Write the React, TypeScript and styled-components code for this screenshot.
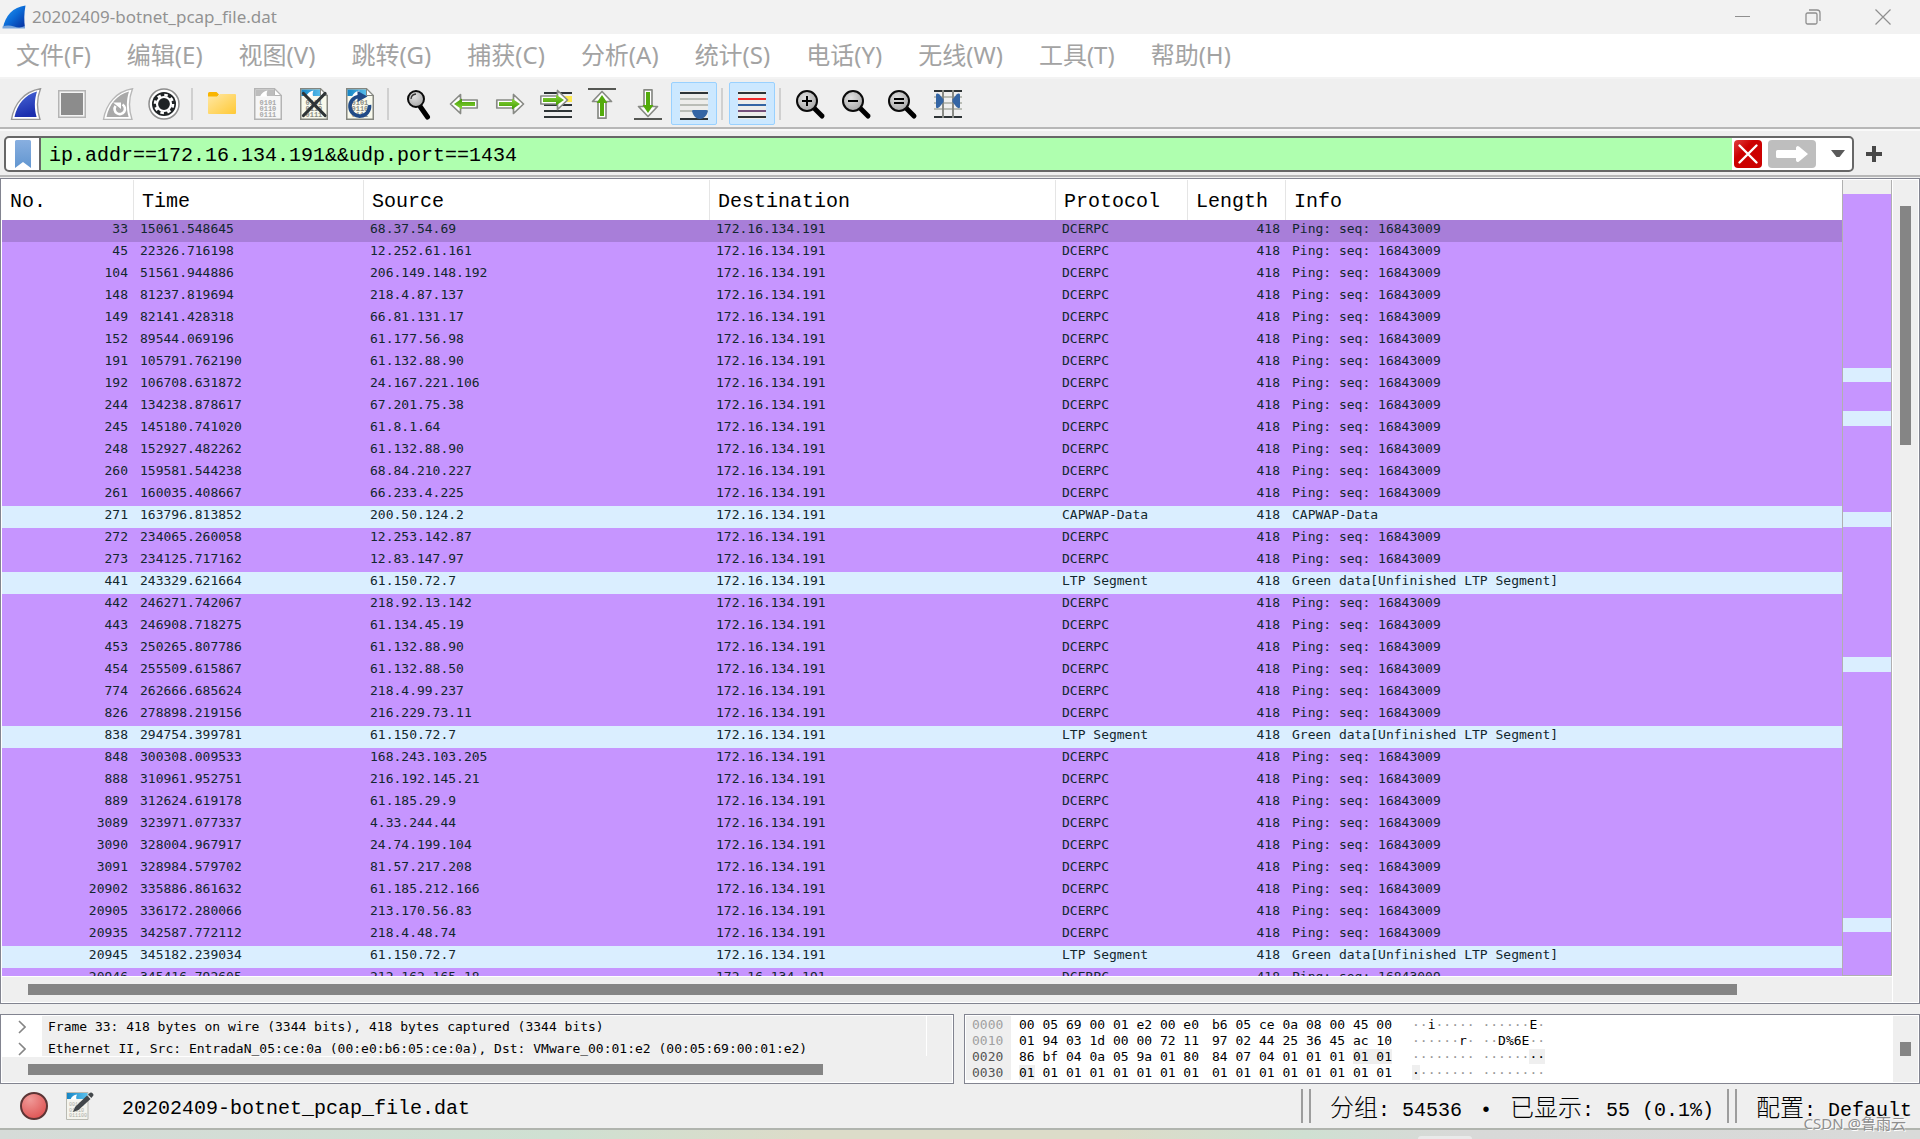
import React from "react";
import styled, { createGlobalStyle } from "styled-components";

const serifMono = `"Liberation Mono", "Noto Sans CJK SC", monospace`;
const dataMono = `"DejaVu Sans Mono", "Noto Sans CJK SC", monospace`;
const uiSans = `"Noto Sans", "Noto Sans CJK SC", sans-serif`;

const c = {
  chrome: "#efefef",
  frame: "#828490",
  line: "#b7b7b7",
  thumb: "#858585",
  purple: "#c695ff",
  selected: "#a87ed9",
  pale: "#daeeff",
};

const Global = createGlobalStyle`
  *, *::before, *::after { box-sizing: border-box; }
  body { margin: 0; background: ${c.chrome}; font-family: ${uiSans}; }
  button { border: 0; padding: 0; margin: 0; background: transparent; font: inherit; color: inherit; }
  svg { display: block; }
`;

/* ---------- window frame ---------- */

const Window = styled.div`
  display: flex;
  flex-direction: column;
  height: 100vh;
  overflow: hidden;
  background: ${c.chrome};
`;

const TitleBar = styled.header`
  display: flex;
  align-items: center;
  flex: none;
  height: 34px;
  padding: 0 2px;
  background: #f2f2f2;
`;

const Title = styled.h1`
  flex: 1;
  margin: 0 0 0 6px;
  font-size: 17px;
  font-weight: 400;
  line-height: 24px;
  color: #929292;
`;

const CaptionButton = styled.button`
  display: grid;
  place-items: center;
  width: 70px;
  height: 34px;
  color: #8f8f8f;
`;

const MenuBar = styled.nav`
  display: flex;
  flex: none;
  gap: 36px;
  height: 45px;
  padding: 0 16px 2px;
  align-items: center;
  background: #fff;
  border-bottom: 2px solid #f3f3f3;
`;

const MenuItem = styled.button`
  font-size: 24px;
  font-weight: 400;
  line-height: 32px;
  color: #a3a3a3;
  white-space: nowrap;
`;

const ToolBar = styled.div`
  display: flex;
  flex: none;
  align-items: center;
  height: 50px;
  padding: 1px 3px 0;
  border-bottom: 2px solid ${c.line};
`;

const ToolButton = styled.button<{ $on?: boolean }>`
  display: grid;
  place-items: center;
  width: 46px;
  height: 43px;
  border: 1px solid ${(p) => (p.$on ? "#99d1ff" : "transparent")};
  border-radius: 2px;
  background: ${(p) => (p.$on ? "#cce8ff" : "transparent")};
`;

const ToolGap = styled.span`
  width: 12px;
  height: 32px;
  padding-left: 4px;
  &::before {
    content: "";
    display: block;
    width: 2px;
    height: 100%;
    background: #d0d0d0;
  }
`;

/* ---------- filter bar ---------- */

const FilterBar = styled.form`
  display: flex;
  flex: none;
  align-items: center;
  gap: 12px;
  height: 48px;
  padding: 2px 38px 0 4px;
  border-top: 2px solid #f9f9f9;
  border-bottom: 2px solid ${c.line};
`;

const FilterField = styled.div`
  display: flex;
  flex: 1;
  align-items: center;
  height: 36px;
  border: 2px solid #676767;
  border-radius: 5px;
  background: #fff;
  overflow: hidden;
`;

const Bookmark = styled.button`
  display: grid;
  place-items: center;
  width: 35px;
  height: 32px;
  border-right: 2px solid #676767;
`;

const FilterInput = styled.input`
  flex: 1;
  min-width: 0;
  height: 32px;
  padding: 2px 8px 0;
  border: 0;
  outline: 0;
  background: #afffaf;
  color: #000;
  font-family: ${serifMono};
  font-size: 20px;
`;

const FilterActions = styled.div`
  display: flex;
  align-items: center;
  gap: 6px;
  padding: 0 1px 0 2px;
`;

const AddButton = styled.button`
  display: grid;
  place-items: center;
  width: 16px;
  height: 32px;
`;

/* ---------- panels ---------- */

const Main = styled.main`
  display: flex;
  flex: 1;
  flex-direction: column;
  gap: 10px;
  min-height: 0;
  padding-top: 1px;
`;

const Panel = styled.section`
  display: flex;
  min-width: 0;
  min-height: 0;
  padding: 1px;
  border: 1px solid ${c.frame};
  background: #fff;
`;

const ListPanel = styled(Panel)`
  flex: 1;
`;

const Column = styled.div`
  display: flex;
  flex: 1;
  flex-direction: column;
  gap: 1px;
  min-width: 0;
  min-height: 0;
`;

const ListBody = styled.div`
  display: flex;
  flex: 1;
  min-height: 0;
`;

const TableClip = styled.div`
  flex: 1;
  min-width: 0;
  overflow: hidden;
`;

const PacketTable = styled.table`
  width: 100%;
  table-layout: fixed;
  border-collapse: collapse;
  font-family: ${dataMono};
  font-size: 13px;
  color: #12272e;
`;

const Col = styled.col<{ $w?: number }>`
  ${(p) => (p.$w ? `width: ${p.$w}px;` : "")}
`;

const Th = styled.th`
  height: 40px;
  padding: 4px 8px 0;
  box-shadow: inset -1px 0 #e5e5e5;
  font-family: ${serifMono};
  font-size: 20px;
  font-weight: 400;
  line-height: 36px;
  text-align: left;
  color: #000;
  &:last-child { box-shadow: none; }
`;

const Row = styled.tr<{ $bg: string }>`
  height: 22px;
  background: ${(p) => p.$bg};
`;

const Td = styled.td<{ $right?: boolean }>`
  padding: 0 6px 4px;
  line-height: 18px;
  text-align: ${(p) => (p.$right ? "right" : "left")};
  white-space: nowrap;
`;

const MiniMap = styled.div`
  display: flex;
  flex-direction: column;
  width: 50px;
  padding-top: 14px;
  border: solid #b0b0b0;
  border-width: 0 1px 1px;
  background: ${c.chrome};
`;

const Stripe = styled.span<{ $grow: number; $pale: boolean }>`
  flex: ${(p) => p.$grow} 0 0;
  background: ${(p) => (p.$pale ? c.pale : c.purple)};
`;

const HTrack = styled.div<{ $left: number }>`
  flex: none;
  height: 25px;
  padding: 7px 0 0 ${(p) => p.$left}px;
  background: ${c.chrome};
`;

const HThumb = styled.div<{ $share: string }>`
  width: ${(p) => p.$share};
  height: 11px;
  background: ${c.thumb};
`;

const VTrack = styled.div<{ $top: string }>`
  display: flex;
  flex: none;
  flex-direction: column;
  width: 25px;
  margin-left: 1px;
  padding: ${(p) => p.$top} 7px 0;
  background: ${c.chrome};
`;

const VThumb = styled.div<{ $size: string }>`
  flex: none;
  height: ${(p) => p.$size};
  background: ${c.thumb};
`;

const Lower = styled.div`
  display: grid;
  flex: none;
  grid-template-columns: minmax(0, 954fr) minmax(0, 956fr);
  gap: 10px;
  height: 70px;
`;

const TreeList = styled.ul`
  flex: 1;
  min-height: 0;
  margin: 0;
  padding: 0;
  list-style: none;
  overflow: hidden;
  font-family: ${dataMono};
  font-size: 13px;
`;

const TreeItem = styled.li`
  display: flex;
  height: 22px;
  line-height: 22px;
  white-space: pre;
`;

const Twisty = styled.button`
  display: grid;
  place-items: center;
  flex: none;
  width: 40px;
  color: #858585;
`;

const TreeText = styled.span`
  flex: 1;
  margin-right: 26px;
  padding-left: 6px;
  background: ${c.chrome};
  box-shadow: 1px 0 #fff;
`;

const TreeShell = styled(Panel)`
  background: linear-gradient(90deg, #fff 50%, ${c.chrome} 50%);
  box-shadow: inset 0 0 0 1px #fff;
`;

const Hex = styled.div`
  display: grid;
  flex: 1;
  grid-template-columns: 46px 193px 193px 1fr;
  grid-auto-rows: 16px;
  overflow: hidden;
  font-family: ${dataMono};
  font-size: 13px;
  line-height: 17px;
  white-space: pre;
`;

const Offset = styled.span<{ $dim: boolean }>`
  padding-left: 6px;
  margin-right: 1px;
  background: ${c.chrome};
  color: ${(p) => (p.$dim ? "#a0a0a0" : "#555")};
`;

const Bytes = styled.span`
  padding-left: 7px;
`;

const Ascii = styled.span`
  padding-left: 14px;
  color: #000;
  i { font-style: normal; color: #999; }
`;

const Mark = styled.mark`
  background: ${c.chrome};
  color: #000;
`;

/* ---------- status bar ---------- */

const StatusBar = styled.footer`
  display: flex;
  flex: none;
  align-items: center;
  height: 46px;
  padding: 0 8px 0 11px;
  border-bottom: 2px solid #b0b4ae;
  font-family: ${serifMono};
  font-size: 20px;
  white-space: pre;
`;

const StatusButton = styled.button`
  display: grid;
  place-items: center;
  width: 46px;
  height: 40px;
`;

const FileName = styled.span`
  flex: 1;
  padding: 4px 0 0 19px;
`;

const Cjk = styled.span`
  font-family: "Noto Sans CJK SC", sans-serif;
  font-size: 24px;
  font-weight: 300;
  line-height: 32px;
`;

const Dot = styled.span`
  display: inline-block;
  width: 24px;
  text-align: center;
`;

const Grip = styled.span`
  width: 10px;
  height: 34px;
  margin: 0 19px 0 13px;
  border: solid #9d9d9d;
  border-width: 0 2px;
`;

const Desktop = styled.div`
  display: flex;
  justify-content: center;
  flex: none;
  height: 9px;
  padding: 6px 0 0 970px;
  background: linear-gradient(90deg, #d6dbd8 0%, #cfe0d2 29%, #dcdcc9 42%, #dcdcc9 58%, #cfe0d2 68%, #d8d9d8 76%, #d9dad9 100%);
`;

const TaskHint = styled.span`
  width: 54px;
  border-radius: 4px 4px 0 0;
  background: #e9eaea;
`;

const Credit = styled.span`
  position: absolute;
  right: 14px;
  bottom: 6px;
  font-size: 15px;
  line-height: 20px;
  color: #8e8e8e;
  text-shadow: 1px 1px #fff;
`;

/* ---------- icons ---------- */

const Svg = ({ w = 32, h = 32, children }: { w?: number; h?: number; children: React.ReactNode }) => (
  <svg width={w} height={h} viewBox={`0 0 ${w} ${h}`} fill="none" aria-hidden="true">
    {children}
  </svg>
);

const Defs = () => (
  <svg width="0" height="0" style={{ position: "absolute" }} aria-hidden="true">
    <defs>
      <linearGradient id="fin" x1="0" y1="0" x2="0.3" y2="1">
        <stop offset="0" stopColor="#4a6ad8" />
        <stop offset="1" stopColor="#1c2fae" />
      </linearGradient>
      <linearGradient id="app" x1="0" y1="0" x2="1" y2="1">
        <stop offset="0" stopColor="#2a9df4" />
        <stop offset="0.5" stopColor="#0b6ad6" />
        <stop offset="1" stopColor="#062c9b" />
      </linearGradient>
      <linearGradient id="folder" x1="0" y1="0" x2="1" y2="1">
        <stop offset="0" stopColor="#ffe8a6" />
        <stop offset="1" stopColor="#ffc935" />
      </linearGradient>
      <linearGradient id="green" x1="0" y1="0" x2="0" y2="1">
        <stop offset="0" stopColor="#8cd63c" />
        <stop offset="1" stopColor="#3f9a00" />
      </linearGradient>
      <linearGradient id="sky" x1="0" y1="0" x2="1" y2="0">
        <stop offset="0" stopColor="#1584c4" />
        <stop offset="1" stopColor="#5ec3ee" />
      </linearGradient>
      <radialGradient id="lens" cx="0.4" cy="0.35" r="0.7">
        <stop offset="0" stopColor="#e0e0e0" />
        <stop offset="1" stopColor="#a6a6a6" />
      </radialGradient>
      <radialGradient id="rec" cx="0.35" cy="0.25" r="0.9">
        <stop offset="0" stopColor="#f09a98" />
        <stop offset="1" stopColor="#dc4a4a" />
      </radialGradient>
      <linearGradient id="mark" x1="0" y1="0" x2="0" y2="1">
        <stop offset="0" stopColor="#88afe0" />
        <stop offset="1" stopColor="#6296d0" />
      </linearGradient>
      <linearGradient id="red" x1="0" y1="0" x2="0.6" y2="0.6">
        <stop offset="0" stopColor="#e04040" />
        <stop offset="0.6" stopColor="#cc0000" />
      </linearGradient>
    </defs>
  </svg>
);

const finPath = "M1.5 31.5C4 16 14 3.500 30.500 .8C26.500 11 26.500 21 30 31.500Z";

const FinIcon = () => (
  <Svg>
    <path d={finPath} fill="#fff" stroke="#9a9a9a" strokeWidth="1.4" />
    <path d="M4.500 29C7 17 15 6.500 27 3.600C24.200 12 24.300 21 26.600 29Z" fill="url(#fin)" />
  </Svg>
);

const StopIcon = () => (
  <Svg>
    <rect x="2.750" y="2.750" width="26.500" height="26.500" fill="#f4f4f4" stroke="#b4b4b4" strokeWidth="1.500" />
    <rect x="5" y="5" width="22" height="22" fill="#8c8c8c" />
  </Svg>
);

const RestartIcon = () => (
  <Svg>
    <path d={finPath} fill="#fff" stroke="#b8b8b8" strokeWidth="1.400" />
    <path d="M4.500 29C7 17 15 6.500 27 3.600C24.200 12 24.300 21 26.600 29Z" fill="#a9a9a9" />
    <path d="M20.500 16.500a5.200 5.200 0 1 1-7 1.500" stroke="#fff" strokeWidth="2.600" />
    <path d="M11 14.500h8v6.500z" fill="#fff" />
  </Svg>
);

const OptionsIcon = () => (
  <Svg>
    <circle cx="16" cy="16" r="15" fill="#fff" stroke="#8d8d8d" strokeWidth="1.500" />
    <circle cx="16" cy="16" r="12" fill="#1f2325" />
    <circle cx="16" cy="16" r="7" stroke="#fff" strokeWidth="2.200" />
    <circle cx="16" cy="16" r="9" stroke="#fff" strokeWidth="2.600" strokeDasharray="3.500 3.570" />
  </Svg>
);

const FolderIcon = () => (
  <Svg>
    <path d="M2 5.500A1.500 1.500 0 0 1 3.500 4h7l2.500 2.500L11 9H2z" fill="#f9b500" />
    <path d="M2 8.500h9.500L14 6h15a1 1 0 0 1 1 1v18a1 1 0 0 1-1 1H3a1 1 0 0 1-1-1z" fill="url(#folder)" />
  </Svg>
);

const Digits = ({ fill }: { fill: string }) => (
  <g fill={fill} fontFamily="Liberation Mono, monospace" fontWeight="700" fontSize="7">
    <text x="7.500" y="16.500">0101</text>
    <text x="7.500" y="22.500">0110</text>
    <text x="7.500" y="28.500">0111</text>
  </g>
);

const Sheet = ({ edge, top, paper, digits }: { edge: string; top: string; paper: string; digits: string }) => (
  <>
    <path d="M2.750 .75H22.500L29.250 7.500V31.250H2.750Z" fill={paper} stroke={edge} strokeWidth="1.500" />
    <path d="M3.500 1.500H22L24 3.500V8H3.500Z" fill={top} />
    <path d="M8 8.500C9.500 5 12 3.200 15.500 2.500C14.500 4.500 14.500 6.500 15.200 8.500Z" fill="#fff" />
    <path d="M22.500 1V7.500H29Z" fill="#fff" stroke={edge} strokeWidth="1" />
    <Digits fill={digits} />
  </>
);

const SaveIcon = () => (
  <Svg>
    <Sheet edge="#b4b4b4" top="#bdbdbd" paper="#f6f6f6" digits="#a9a9a9" />
  </Svg>
);

const CloseFileIcon = () => (
  <Svg>
    <Sheet edge="#84867f" top="url(#sky)" paper="#f8f9ec" digits="#8a8c84" />
    <path d="M5.500 5.500L27 27.500M27 5.500L5.500 27.500" stroke="#2e3436" strokeWidth="3.200" strokeLinecap="round" />
  </Svg>
);

const ReloadIcon = () => (
  <Svg>
    <Sheet edge="#84867f" top="url(#sky)" paper="#f8f9ec" digits="#8a8c84" />
    <path d="M25.500 17A9.800 9.800 0 1 1 15 8.500" stroke="#204a87" strokeWidth="3.600" />
    <path d="M13.500 3L23.500 8.500L13.500 14Z" fill="#204a87" />
  </Svg>
);

const FindIcon = () => (
  <Svg>
    <path d="M18.500 19L25.500 29" stroke="#000" strokeWidth="5" strokeLinecap="round" />
    <circle cx="14" cy="11" r="8" fill="url(#lens)" stroke="#0b0b0b" strokeWidth="2" />
    <path d="M9 11a5.500 5.500 0 0 1 5-5" stroke="#333" strokeWidth="1.300" />
  </Svg>
);

const arrowOuter = "M29.500 16L19.500 6.500V12H2.800V20H19.500V25.500Z";
const arrowInner = "M26 16L18 10.500V14H5V18H18V21.500Z";

const Arrow = ({ turn = 0, shift = "" }: { turn?: number; shift?: string }) => (
  <g transform={`${shift} rotate(${turn} 16 16)`}>
    <path d={arrowOuter} fill="#fff" stroke="#888a85" strokeWidth="1.700" strokeLinejoin="round" />
    <path d={arrowInner} fill={turn % 180 ? "#53ab0c" : "url(#green)"} />
  </g>
);

const Bars = ({ list, x = 2, w = 28 }: { list: [number, string][]; x?: number; w?: number }) => (
  <>
    {list.map(([y, f]) => (
      <rect key={y} x={x} y={y} width={w} height="2" fill={f} />
    ))}
  </>
);

const GotoIcon = () => (
  <Svg>
    <rect x="20" y="8" width="12" height="6" fill="#fce94f" />
    <Bars x={4} list={[[4, "#2e3436"], [16, "#2e3436"], [22, "#2e3436"], [28, "#2e3436"]]} />
    <Arrow shift="translate(-2 -4)" />
  </Svg>
);

const FirstIcon = () => (
  <Svg>
    <Bars list={[[0, "#555753"]]} />
    <Arrow turn={-90} shift="translate(0 1)" />
  </Svg>
);

const LastIcon = () => (
  <Svg>
    <Arrow turn={90} shift="translate(0 -1)" />
    <Bars list={[[30, "#555753"]]} />
  </Svg>
);

const AutoScrollIcon = () => (
  <Svg>
    <rect x="2" y="3" width="28" height="28" fill="#ededea" />
    <Bars list={[[4, "#2e3436"], [10, "#babdb6"], [16, "#babdb6"], [22, "#babdb6"], [30, "#2e3436"]]} />
    <path d="M14 23C14 22 15 22 16 22H28C30 22 30 23 29.500 24.500C28.500 28 25.500 31 22 31S15 28 14 23Z" fill="#3465a4" />
  </Svg>
);

const ColorizeIcon = () => (
  <Svg>
    <rect x="2" y="3" width="28" height="28" fill="#ededea" />
    <Bars list={[[4, "#2e3436"], [10, "#ef2929"], [16, "#3465a4"], [22, "#75507b"], [28, "#2e3436"]]} />
  </Svg>
);

const ZoomIcon = ({ sign }: { sign: string }) => (
  <Svg>
    <path d="M20 20L28 28" stroke="#000" strokeWidth="5" strokeLinecap="round" />
    <circle cx="13" cy="13" r="10" fill="url(#lens)" stroke="#0b0b0b" strokeWidth="2" />
    <path d={sign} stroke="#000" strokeWidth="2" />
  </Svg>
);

const ResizeIcon = () => (
  <Svg>
    <Bars list={[[2, "#2e3436"], [8, "#babdb6"], [14, "#babdb6"], [20, "#babdb6"], [28, "#2e3436"]]} />
    <rect x="10" y="2" width="2" height="28" fill="#888a85" />
    <rect x="20" y="2" width="2" height="28" fill="#888a85" />
    <path d="M4 7C4 5 6 5 7.500 6.500L11.500 11.500V14L7.500 19C6 20.500 4 20.500 4 19Z" fill="#3465a4" />
    <path d="M28 7C28 5 26 5 24.500 6.500L20.500 11.500V14L24.500 19C26 20.500 28 20.500 28 19Z" fill="#3465a4" />
  </Svg>
);

/* ---------- data ---------- */

const menus = ["文件(F)", "编辑(E)", "视图(V)", "跳转(G)", "捕获(C)", "分析(A)", "统计(S)", "电话(Y)", "无线(W)", "工具(T)", "帮助(H)"];

const packets: [number, string, string, string?][] = [
  [33, "15061.548645", "68.37.54.69"],
  [45, "22326.716198", "12.252.61.161"],
  [104, "51561.944886", "206.149.148.192"],
  [148, "81237.819694", "218.4.87.137"],
  [149, "82141.428318", "66.81.131.17"],
  [152, "89544.069196", "61.177.56.98"],
  [191, "105791.762190", "61.132.88.90"],
  [192, "106708.631872", "24.167.221.106"],
  [244, "134238.878617", "67.201.75.38"],
  [245, "145180.741020", "61.8.1.64"],
  [248, "152927.482262", "61.132.88.90"],
  [260, "159581.544238", "68.84.210.227"],
  [261, "160035.408667", "66.233.4.225"],
  [271, "163796.813852", "200.50.124.2", "CAPWAP-Data"],
  [272, "234065.260058", "12.253.142.87"],
  [273, "234125.717162", "12.83.147.97"],
  [441, "243329.621664", "61.150.72.7", "LTP Segment"],
  [442, "246271.742067", "218.92.13.142"],
  [443, "246908.718275", "61.134.45.19"],
  [453, "250265.807786", "61.132.88.90"],
  [454, "255509.615867", "61.132.88.50"],
  [774, "262666.685624", "218.4.99.237"],
  [826, "278898.219156", "216.229.73.11"],
  [838, "294754.399781", "61.150.72.7", "LTP Segment"],
  [848, "300308.009533", "168.243.103.205"],
  [888, "310961.952751", "216.192.145.21"],
  [889, "312624.619178", "61.185.29.9"],
  [3089, "323971.077337", "4.33.244.44"],
  [3090, "328004.967917", "24.74.199.104"],
  [3091, "328984.579702", "81.57.217.208"],
  [20902, "335886.861632", "61.185.212.166"],
  [20905, "336172.280066", "213.170.56.83"],
  [20935, "342587.772112", "218.4.48.74"],
  [20945, "345182.239034", "61.150.72.7", "LTP Segment"],
  [20946, "345416.792605", "212.162.165.18"],
];

const infoFor: Record<string, string> = {
  DCERPC: "Ping: seq: 16843009",
  "CAPWAP-Data": "CAPWAP-Data",
  "LTP Segment": "Green data[Unfinished LTP Segment]",
};

const stripes = [174, 14, 29, 15, 86, 15, 130, 15, 246, 14, 43];

const details = [
  "Frame 33: 418 bytes on wire (3344 bits), 418 bytes captured (3344 bits)",
  "Ethernet II, Src: EntradaN_05:ce:0a (00:e0:b6:05:ce:0a), Dst: VMware_00:01:e2 (00:05:69:00:01:e2)",
];

/* Highlighted bytes and characters are wrapped in braces. */
const hexRows = [
  ["0000", "00 05 69 00 01 e2 00 e0", "b6 05 ce 0a 08 00 45 00", "··i····· ······E·"],
  ["0010", "01 94 03 1d 00 00 72 11", "97 02 44 25 36 45 ac 10", "······r· ··D%6E··"],
  ["0020", "86 bf 04 0a 05 9a 01 80", "84 07 04 01 01 01 {01 01}", "········ ······{··}"],
  ["0030", "{01} 01 01 01 01 01 01 01", "01 01 01 01 01 01 01 01", "{·}······· ········"],
];

const marked = (text: string) =>
  text.split(/(\{.*?\})/).filter(Boolean).map((part, i) =>
    part[0] === "{" ? (
      <Mark key={i}>{part.slice(1, -1)}</Mark>
    ) : (
      part.split(/(·+)/).map((s, j) => (s[0] === "·" ? <i key={`${i}-${j}`}>{s}</i> : s))
    ),
  );

const tools: ([string, React.ReactNode, boolean?] | null)[] = [
  ["Start capture", <FinIcon />],
  ["Stop capture", <StopIcon />],
  ["Restart capture", <RestartIcon />],
  ["Capture options", <OptionsIcon />],
  null,
  ["Open", <FolderIcon />],
  ["Save", <SaveIcon />],
  ["Close file", <CloseFileIcon />],
  ["Reload", <ReloadIcon />],
  null,
  ["Find packet", <FindIcon />],
  ["Previous packet", <Svg><Arrow turn={180} /></Svg>],
  ["Next packet", <Svg><Arrow /></Svg>],
  ["Go to packet", <GotoIcon />],
  ["First packet", <FirstIcon />],
  ["Last packet", <LastIcon />],
  ["Auto scroll", <AutoScrollIcon />, true],
  null,
  ["Colorize", <ColorizeIcon />, true],
  null,
  ["Zoom in", <ZoomIcon sign="M8 13H18M13 8V18" />],
  ["Zoom out", <ZoomIcon sign="M8 13H18" />],
  ["Normal size", <ZoomIcon sign="M8 11H18M8 15H18" />],
  ["Resize columns", <ResizeIcon />],
];

export default function App() {
  const [filter, setFilter] = React.useState("ip.addr==172.16.134.191&&udp.port==1434");

  return (
    <Window>
      <Global />
      <Defs />
      <TitleBar>
        <Svg w={24} h={24}>
          <path d="M1 23C3 11 11 2 23.500 .5C22 8 22 16 23 23Z" fill="url(#app)" />
          <path d="M.5 21.500Q6 19.500 12 21.500T23 21V23.500H.5Z" fill="#7aa6dc" />
        </Svg>
        <Title>20202409-botnet_pcap_file.dat</Title>
        <CaptionButton aria-label="Minimize">
          <Svg w={16} h={16}><path d="M0 7.500H15" stroke="currentColor" /></Svg>
        </CaptionButton>
        <CaptionButton aria-label="Restore">
          <Svg w={16} h={16}>
            <rect x="1" y="4" width="11" height="11" rx="1.500" stroke="currentColor" strokeWidth="1.300" />
            <path d="M4 1H12A3 3 0 0 1 15 4V12" stroke="currentColor" strokeWidth="1.300" />
          </Svg>
        </CaptionButton>
        <CaptionButton aria-label="Close">
          <Svg w={16} h={16}><path d="M.5 .5L15.500 15.500M15.500 .5L.5 15.500" stroke="currentColor" strokeWidth="1.200" /></Svg>
        </CaptionButton>
      </TitleBar>

      <MenuBar>
        {menus.map((m) => <MenuItem key={m}>{m}</MenuItem>)}
      </MenuBar>

      <ToolBar role="toolbar">
        {tools.map((t, i) =>
          t ? <ToolButton key={t[0]} aria-label={t[0]} $on={t[2]}>{t[1]}</ToolButton> : <ToolGap key={i} />,
        )}
      </ToolBar>

      <FilterBar onSubmit={(e) => e.preventDefault()}>
        <FilterField>
          <Bookmark type="button" aria-label="Filter bookmarks">
            <Svg w={16} h={28}><path d="M0 1.500Q0 0 1.500 0H14.500Q16 0 16 1.500V28L8 22L0 28Z" fill="url(#mark)" /></Svg>
          </Bookmark>
          <FilterInput aria-label="Display filter" spellCheck={false} value={filter} onChange={(e) => setFilter(e.target.value)} />
          <FilterActions>
            <button type="button" aria-label="Clear filter" onClick={() => setFilter("")}>
              <Svg w={28} h={28}>
                <rect width="28" height="28" rx="4" fill="url(#red)" />
                <path d="M5.500 5.500L22.500 22.500M22.500 5.500L5.500 22.500" stroke="#fff" strokeWidth="2.400" strokeLinecap="round" />
              </Svg>
            </button>
            <button type="submit" aria-label="Apply filter">
              <Svg w={48} h={28}>
                <rect width="48" height="28" rx="4" fill="#bebebe" />
                <path d="M9.500 10H28V7.500Q29 5 31 6.500L40 14L31 21.500Q29 23 28 20.500V18H9.500Q8 18 8 16.500V11.500Q8 10 9.500 10Z" fill="#fff" />
              </Svg>
            </button>
            <button type="button" aria-label="Recent filters">
              <Svg w={29} h={28}><path d="M9 10H23L17.500 17H14.500Z" fill="#5a5a5a" /></Svg>
            </button>
          </FilterActions>
        </FilterField>
        <AddButton type="button" aria-label="Add filter button">
          <Svg w={16} h={16}><path d="M8 0V16M0 8H16" stroke="#484848" strokeWidth="4" /></Svg>
        </AddButton>
      </FilterBar>

      <Main>
        <ListPanel>
          <Column>
            <ListBody>
              <TableClip>
                <PacketTable>
                  <colgroup>
                    {[132, 230, 346, 346, 132, 98, undefined].map((w, i) => <Col key={i} $w={w} />)}
                  </colgroup>
                  <thead>
                    <tr>
                      {["No.", "Time", "Source", "Destination", "Protocol", "Length", "Info"].map((h) => <Th key={h}>{h}</Th>)}
                    </tr>
                  </thead>
                  <tbody>
                    {packets.map(([no, time, source, proto = "DCERPC"], i) => (
                      <Row key={no} $bg={i === 0 ? c.selected : proto === "DCERPC" ? c.purple : c.pale}>
                        <Td $right>{no}</Td>
                        <Td>{time}</Td>
                        <Td>{source}</Td>
                        <Td>172.16.134.191</Td>
                        <Td>{proto}</Td>
                        <Td $right>418</Td>
                        <Td>{infoFor[proto]}</Td>
                      </Row>
                    ))}
                  </tbody>
                </PacketTable>
              </TableClip>
              <MiniMap>
                {stripes.map((g, i) => <Stripe key={i} $grow={g} $pale={i % 2 === 1} />)}
              </MiniMap>
            </ListBody>
            <HTrack $left={26}><HThumb $share="91.7%" /></HTrack>
          </Column>
          <VTrack $top="26px"><VThumb $size="30%" /></VTrack>
        </ListPanel>

        <Lower>
          <TreeShell>
            <Column>
              <TreeList>
                {details.map((d) => (
                  <TreeItem key={d}>
                    <Twisty aria-label="Expand">
                      <Svg w={8} h={14}><path d="M1 1L7 7L1 13" stroke="currentColor" strokeWidth="1.600" /></Svg>
                    </Twisty>
                    <TreeText>{d}</TreeText>
                  </TreeItem>
                ))}
              </TreeList>
              <HTrack $left={26}><HThumb $share="86%" /></HTrack>
            </Column>
          </TreeShell>
          <Panel>
            <Hex>
              {hexRows.map(([off, a, b, text], i) => (
                <React.Fragment key={off}>
                  <Offset $dim={i < 2}>{off}</Offset>
                  <Bytes>{marked(a)}</Bytes>
                  <Bytes>{marked(b)}</Bytes>
                  <Ascii>{marked(text)}</Ascii>
                </React.Fragment>
              ))}
            </Hex>
            <VTrack $top="26px"><VThumb $size="14px" /></VTrack>
          </Panel>
        </Lower>
      </Main>

      <StatusBar>
        <StatusButton aria-label="Expert information">
          <Svg w={28} h={28}><circle cx="14" cy="14" r="13" fill="url(#rec)" stroke="#5c3535" strokeWidth="2" /></Svg>
        </StatusButton>
        <StatusButton aria-label="Capture file comments">
          <Svg w={28} h={28}>
            <path d="M.5 .5H22V27.500H.5Z" fill="#f4f4ee" stroke="#b9bab2" />
            <path d="M1 1H21.500V7H1Z" fill="url(#sky)" />
            <path d="M4.500 7.500C5.500 4.500 8 3 11 2.500Q9.500 5 10.500 7.500Z" fill="#fff" />
            <g fill="#aaaca6" fontFamily="Liberation Mono, monospace" fontSize="5">
              <text x="3" y="14">00110</text>
              <text x="3" y="19.500">01010</text>
              <text x="3" y="25">011100</text>
            </g>
            <path d="M7 20L9 15L21 3.500L24.500 7L12.500 18Z" fill="#42474a" />
            <path d="M22 2.500L24 .8Q25.500 0 26.800 1.500T27 4L25.300 6Z" fill="#42474a" />
          </Svg>
        </StatusButton>
        <FileName>20202409-botnet_pcap_file.dat</FileName>
        <Grip />
        <span><Cjk>分组</Cjk>: 54536 <Dot>•</Dot> <Cjk>已显示</Cjk>: 55 (0.1%)</span>
        <Grip />
        <span><Cjk>配置</Cjk>: Default</span>
      </StatusBar>
      <Desktop><TaskHint /></Desktop>
      <Credit>CSDN @鲁雨云</Credit>
    </Window>
  );
}
